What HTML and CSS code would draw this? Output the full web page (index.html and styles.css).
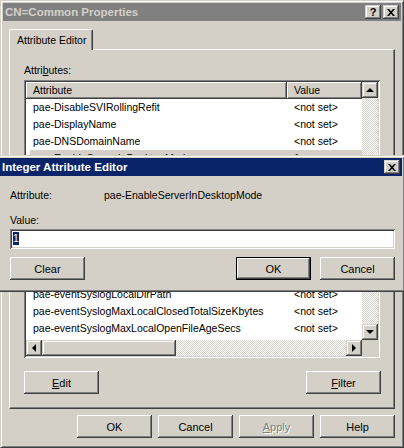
FILE: index.html
```html
<!DOCTYPE html>
<html lang="en">
<head>
  <meta charset="UTF-8" />
  <title>CN=Common Properties</title>
  <link rel="stylesheet" href="styles.css">
</head>
<body>

  <!-- Properties window -->
  <div class="window">
    <div class="titlebar inactive">
      <span>CN=Common Properties</span>
      <div class="title-buttons">
        <span class="tbtn">?</span>
        <span class="tbtn">
          <svg width="8" height="7" viewBox="0 0 8 7"><path d="M0 0h2l2 2.3 2-2.3h2l-3 3.5 3 3.5h-2l-2-2.3-2 2.3h-2l3-3.5z"/></svg>
        </span>
      </div>
    </div>

    <div class="content">
      <div class="tabs">
        <div class="tab">Attribute Editor</div>
      </div>

      <div class="panel">
        <div class="label">Attri<u>b</u>utes:</div>

        <div class="list">
          <div class="list-view">
            <div class="list-header">
              <div class="head head-name">Attribute</div>
              <div class="head head-value">Value</div>
            </div>
            <div class="row"><span class="name">pae-DisableSVIRollingRefit</span><span class="value">&lt;not set&gt;</span></div>
            <div class="row"><span class="name">pae-DisplayName</span><span class="value">&lt;not set&gt;</span></div>
            <div class="row"><span class="name">pae-DNSDomainName</span><span class="value">&lt;not set&gt;</span></div>
            <div class="row selected"><span class="name">pae-EnableServerInDesktopMode</span><span class="value">1</span></div>
            <div class="row"><span class="name">pae-EnableShadowing</span><span class="value">&lt;not set&gt;</span></div>
            <div class="row"><span class="name">pae-EncryptionLevel</span><span class="value">&lt;not set&gt;</span></div>
            <div class="row"><span class="name">pae-EntitlementPolicy</span><span class="value">&lt;not set&gt;</span></div>
            <div class="row"><span class="name">pae-eventSyslogCrossDomainLogFile</span><span class="value">&lt;not set&gt;</span></div>
            <div class="row"><span class="name">pae-eventSyslogEnabled</span><span class="value">&lt;not set&gt;</span></div>
            <div class="row"><span class="name">pae-eventSyslogFilePath</span><span class="value">&lt;not set&gt;</span></div>
            <div class="row"><span class="name">pae-eventSyslogHost</span><span class="value">&lt;not set&gt;</span></div>
            <div class="row"><span class="name">pae-eventSyslogLocalDirPath</span><span class="value">&lt;not set&gt;</span></div>
            <div class="row"><span class="name">pae-eventSyslogMaxLocalClosedTotalSizeKbytes</span><span class="value">&lt;not set&gt;</span></div>
            <div class="row"><span class="name">pae-eventSyslogMaxLocalOpenFileAgeSecs</span><span class="value">&lt;not set&gt;</span></div>
            <div class="row"><span class="name">pae-eventSyslogMaxLocalOpenFileSizeKbytes</span><span class="value">&lt;not set&gt;</span></div>
          </div>

          <div class="vscroll">
            <div class="sbtn"><i class="arrow up"></i></div>
            <div class="track"></div>
            <div class="sbtn"><i class="arrow down"></i></div>
          </div>

          <div class="hscroll">
            <div class="sbtn"><i class="arrow left"></i></div>
            <div class="thumb"></div>
            <div class="track"></div>
            <div class="sbtn"><i class="arrow right"></i></div>
          </div>

          <div class="corner"></div>
        </div>

        <div class="panel-buttons">
          <div class="btn"><span><u>E</u>dit</span></div>
          <div class="btn"><span><u>F</u>ilter</span></div>
        </div>
      </div>

      <div class="dialog-buttons">
        <div class="btn">OK</div>
        <div class="btn">Cancel</div>
        <div class="btn disabled"><span><u>A</u>pply</span></div>
        <div class="btn">Help</div>
      </div>
    </div>
  </div>

  <!-- Integer Attribute Editor (modal, lies over the window) -->
  <div class="dialog">
    <div class="titlebar active">
      <span>Integer Attribute Editor</span>
      <div class="title-buttons">
        <span class="tbtn">
          <svg width="8" height="7" viewBox="0 0 8 7"><path d="M0 0h2l2 2.3 2-2.3h2l-3 3.5 3 3.5h-2l-2-2.3-2 2.3h-2l3-3.5z"/></svg>
        </span>
      </div>
    </div>

    <div class="dialog-body">
      <div class="field-row">
        <span class="field-label">Attribute:</span>
        <span>pae-EnableServerInDesktopMode</span>
      </div>
      <div class="field-row value-label">Value:</div>
      <div class="input"><span class="sel">1</span></div>
      <div class="editor-buttons">
        <div class="btn">Clear</div>
        <div class="spacer"></div>
        <div class="btn default">OK</div>
        <div class="btn cancel">Cancel</div>
      </div>
    </div>
  </div>

</body>
</html>
```

FILE: styles.css
```css
* {
  box-sizing: border-box;
}

body {
  margin: 0;
  width: 404px;
  height: 448px;
  overflow: hidden;
  position: relative;
  font-family: "Liberation Sans", Arial, sans-serif;
  font-size: 10.5px;
  color: #000;
  background-color: #d4d0c8;
}

u {
  text-decoration: underline;
  text-underline-offset: 1px;
}

/* Window frame */
.window {
  width: 404px;
  height: 448px;
  background-color: #d4d0c8;
  border: 1px solid;
  border-color: #d4d0c8 #404040 #404040 #d4d0c8;
  box-shadow: inset 1px 1px #fff, inset -1px -1px #808080;
  padding: 2px;
  display: flex;
  flex-direction: column;
}

.titlebar {
  height: 18px;
  flex-shrink: 0;
  display: flex;
  align-items: center;
  justify-content: space-between;
  padding: 0 2px;
  font-weight: bold;
  font-size: 11.5px;
}

.titlebar.inactive {
  background-color: #808080;
  color: #d4d0c8;
}

.titlebar.active {
  background-color: #0a246a;
  color: #fff;
}

.title-buttons {
  display: flex;
  gap: 2px;
}

.tbtn {
  width: 16px;
  height: 14px;
  display: flex;
  align-items: center;
  justify-content: center;
  color: #000;
  font-size: 11px;
  font-weight: bold;
  background-color: #d4d0c8;
  box-shadow: inset -1px -1px #404040, inset 1px 1px #d4d0c8, inset -2px -2px #808080, inset 2px 2px #fff;
}

/* Tabs and panel */
.content {
  padding: 0 6px;
  display: flex;
  flex-direction: column;
}

.tabs {
  margin-top: 8px;
  display: flex;
}

.tab {
  position: relative;
  z-index: 1;
  width: 84px;
  height: 21px;
  margin-bottom: -1px;
  padding: 4px 0 0 7px;
  line-height: 13px;
  background-color: #d4d0c8;
  border-top: 1px solid #fff;
  border-left: 1px solid #fff;
  border-right: 1px solid #404040;
  border-radius: 2px 2px 0 0;
  box-shadow: inset -1px 0 #808080;
}

.panel {
  border: 1px solid;
  border-color: #fff #404040 #404040 #fff;
  box-shadow: inset -1px -1px #808080;
  padding: 14px 13px 14px 14px;
}

.label {
  line-height: 13px;
  margin-bottom: 3px;
}

/* List view */
.list {
  width: 356px;
  height: 278px;
  padding: 2px;
  background-color: #fff;
  box-shadow: inset 1px 1px #808080, inset -1px -1px #fff, inset 2px 2px #404040, inset -2px -2px #d4d0c8;
  display: grid;
  grid-template-columns: 1fr 16px;
  grid-template-rows: 1fr 16px;
}

.list-view {
  overflow: hidden;
}

.list-header {
  display: flex;
  height: 17px;
}

.head {
  height: 17px;
  line-height: 16px;
  padding-left: 7px;
  background-color: #d4d0c8;
  box-shadow: inset -1px -1px #404040, inset 1px 1px #fff, inset -2px -2px #808080;
}

.head-name {
  width: 261px;
}

.head-value {
  width: 75px;
}

.row {
  display: flex;
  height: 17px;
  line-height: 17px;
  margin-left: 4px;
  white-space: nowrap;
}

.row .name {
  width: 257px;
  padding-left: 3px;
}

.row .value {
  width: 75px;
  padding-left: 7px;
}

.row.selected {
  background-color: #d4d0c8;
}

/* Scroll bars */
.vscroll {
  display: flex;
  flex-direction: column;
}

.hscroll {
  display: flex;
}

.sbtn {
  width: 16px;
  height: 16px;
  flex-shrink: 0;
  display: flex;
  align-items: center;
  justify-content: center;
  background-color: #d4d0c8;
  box-shadow: inset -1px -1px #404040, inset 1px 1px #d4d0c8, inset -2px -2px #808080, inset 2px 2px #fff;
}

.track {
  flex: 1;
  background: repeating-conic-gradient(#fff 0 25%, #d4d0c8 0 50%) 0 0 / 2px 2px;
}

.thumb {
  width: 134px;
  background-color: #d4d0c8;
  box-shadow: inset -1px -1px #404040, inset 1px 1px #d4d0c8, inset -2px -2px #808080, inset 2px 2px #fff;
}

.corner {
  background-color: #d4d0c8;
}

.arrow {
  width: 0;
  height: 0;
  border: 0 solid transparent;
}

.arrow.up {
  border-width: 0 4px 4px;
  border-bottom-color: #000;
  margin-top: -1px;
}

.arrow.down {
  border-width: 4px 4px 0;
  border-top-color: #000;
}

.arrow.left {
  border-width: 4px 4px 4px 0;
  border-right-color: #000;
  margin-left: -1px;
}

.arrow.right {
  border-width: 4px 0 4px 4px;
  border-left-color: #000;
}

/* Buttons */
.btn {
  width: 75px;
  height: 23px;
  display: flex;
  align-items: center;
  justify-content: center;
  font-size: 11px;
  background-color: #d4d0c8;
  box-shadow: inset -1px -1px #404040, inset 1px 1px #fff, inset -2px -2px #808080, inset 2px 2px #d4d0c8;
}

.btn.default {
  box-shadow: inset 0 0 0 1px #000, inset -2px -2px #404040, inset 2px 2px #fff, inset -3px -3px #808080;
}

.btn.disabled {
  color: #808080;
  text-shadow: 1px 1px 0 #fff;
}

.panel-buttons {
  margin-top: 13px;
  display: flex;
  justify-content: space-between;
}

.dialog-buttons {
  margin-top: 6px;
  display: flex;
  justify-content: flex-end;
  gap: 6px;
}

/* Integer Attribute Editor */
.dialog {
  position: absolute;
  left: -3px;
  top: 155px;
  width: 408px;
  height: 137px;
  background-color: #d4d0c8;
  border: 1px solid;
  border-color: #d4d0c8 #404040 #404040 #d4d0c8;
  box-shadow: inset 1px 1px #fff, inset -1px -1px #808080;
  padding: 2px;
}

.dialog-body {
  padding: 13px 7px 0 10px;
}

.field-row {
  display: flex;
  line-height: 12px;
}

.field-label {
  width: 94px;
}

.value-label {
  margin-top: 13px;
}

.input {
  margin-top: 3px;
  height: 20px;
  padding: 3px 3px 1px;
  background-color: #fff;
  box-shadow: inset 1px 1px #808080, inset -1px -1px #fff, inset 2px 2px #404040, inset -2px -2px #d4d0c8;
  line-height: 13px;
}

.input .sel {
  display: inline-block;
  width: 6px;
  background-color: #0a246a;
  color: #fff;
}

.editor-buttons {
  margin-top: 8px;
  display: flex;
}

.editor-buttons .spacer {
  flex: 1;
}

.editor-buttons .cancel {
  margin-left: 9px;
}
```
